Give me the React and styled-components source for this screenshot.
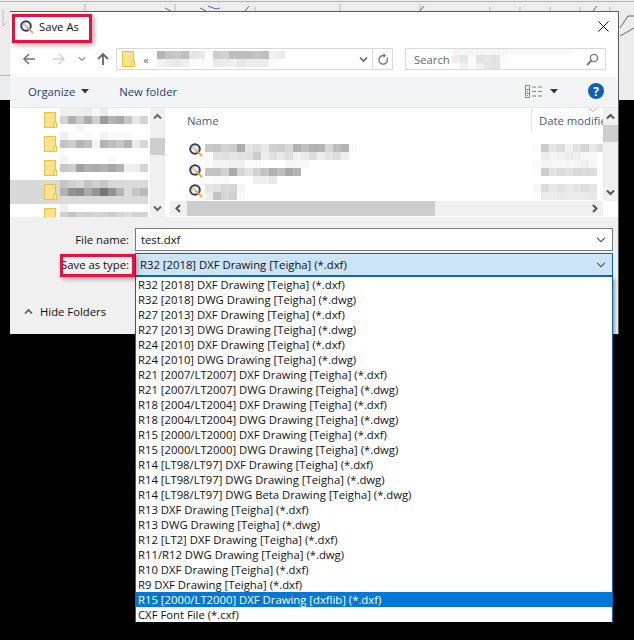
import React from 'react';
import styled, { createGlobalStyle } from 'styled-components';

const GlobalStyle = createGlobalStyle`
  html, body { margin: 0; padding: 0; background: #000; }
  * { box-sizing: border-box; }
  body { font-family: "Open Sans", "Noto Sans", sans-serif; font-size: 11.3px; color: #111; }
`;

const Page = styled.div`
  position: relative;
  width: 634px;
  height: 640px;
  overflow: hidden;
  background: #000;
  padding: 11px 0 0 10px;
`;

const Backdrop = styled.svg`
  position: absolute;
  left: 0;
  top: 0;
`;

const Dialog = styled.div`
  position: relative;
  width: 609px;
  height: 323px;
  background: #f0f0f0;
  border-top: 1px solid #5c5c5c;
  border-right: 1px solid #5c5c5c;
  display: flex;
  flex-direction: column;
`;

const TitleBar = styled.div`
  height: 24px;
  background: #fff;
  display: flex;
  align-items: center;
  padding: 5px 9px 0 10px;
  flex: none;
`;

const TitleText = styled.span`
  margin-left: 5px;
  flex: 1;
`;

const AddressRow = styled.div`
  height: 41px;
  background: #fff;
  flex: none;
  display: flex;
  align-items: flex-start;
  padding: 12px 12px 0 12px;
`;

const NavButton = styled.span`
  width: ${p => p.$w}px;
  margin-left: ${p => p.$ml || 0}px;
  height: 22px;
  display: flex;
  align-items: center;
  justify-content: center;
  flex: none;
`;

const AddressBox = styled.div`
  width: 277px;
  height: 22px;
  border: 1px solid #d9d9d9;
  display: flex;
  align-items: center;
  padding-left: 5px;
`;

const Crumb = styled.span`
  width: 22px;
  text-align: center;
  color: #666;
  font-size: 11px;
`;

const AddressEnd = styled.div`
  margin-left: auto;
  display: flex;
  height: 100%;
  align-items: center;
`;

const Divider = styled.span`
  width: 20px;
  height: 100%;
  border-left: 1px solid #d9d9d9;
  display: flex;
  align-items: center;
  justify-content: center;
`;

const SearchBox = styled.div`
  width: 201px;
  height: 22px;
  border: 1px solid #d9d9d9;
  margin-left: 12px;
  display: flex;
  align-items: center;
  padding: 0 6px 0 8px;
  color: #666;
  gap: 2px;
  overflow: hidden;
`;

const SearchIcon = styled.svg`
  margin-left: auto;
  flex: none;
`;

const Toolbar = styled.div`
  height: 31px;
  background: #f3f4f6;
  border-bottom: 1px solid #e4e6ea;
  flex: none;
  display: flex;
  align-items: center;
  padding: 0 14px 2px 18px;
  color: #1e3f73;
`;

const ToolLabel = styled.span`
  margin-right: ${p => p.$gap}px;
  display: flex;
  align-items: center;
  gap: 6px;
`;

const ToolRight = styled.div`
  margin-left: auto;
  display: flex;
  align-items: center;
`;

const HelpIcon = styled.svg`
  margin-left: 22px;
`;

const Panes = styled.div`
  height: 109px;
  flex: none;
  display: flex;
  background: #fff;
  overflow: hidden;
`;

const Tree = styled.div`
  width: 140px;
  flex: none;
  overflow: hidden;
`;

const TreeRow = styled.div`
  height: 24px;
  display: flex;
  align-items: center;
  gap: 3px;
  padding-left: 34px;
  margin-right: 2px;
  background: ${p => (p.$active ? '#d9d9d9' : '#fff')};
`;

const VScroll = styled.div`
  width: 15px;
  flex: none;
  background: #f0f0f0;
  display: flex;
  flex-direction: column;
  justify-content: space-between;
  height: ${p => p.$h}px;
  position: relative;
`;

const ScrollArrow = styled.span`
  width: ${p => (p.$wide ? 17 : 15)}px;
  height: ${p => (p.$wide ? 15 : 17)}px;
  flex: none;
  display: flex;
  align-items: center;
  justify-content: center;
  margin-left: ${p => (p.$end ? 'auto' : 0)};
`;

const ScrollTrack = styled.div`
  flex: 1;
  padding-top: ${p => p.$before}px;
`;

const ScrollThumb = styled.span`
  display: block;
  background: #cdcdcd;
  height: 17px;
`;

const Files = styled.div`
  flex: 1;
  margin-left: 5px;
  display: flex;
  flex-direction: column;
  min-width: 0;
`;

const FilesTop = styled.div`
  height: 93px;
  flex: none;
  display: flex;
`;

const FilesMain = styled.div`
  flex: 1;
  min-width: 0;
  display: flex;
  flex-direction: column;
  overflow: hidden;
`;

const HeaderRow = styled.div`
  height: 25px;
  flex: none;
  display: flex;
  align-items: center;
  color: #3f5a8c;
  padding-left: 17px;
`;

const NameHeader = styled.span`
  flex: 1;
`;

const DateHeader = styled.span`
  position: relative;
  width: 72px;
  height: 25px;
  flex: none;
  overflow: hidden;
  white-space: nowrap;
  border-left: 1px solid #e5e5e5;
  padding-left: 7px;
  line-height: 25px;
`;

const SortMark = styled.svg`
  position: absolute;
  right: 6px;
  top: 0;
`;

const FileRows = styled.div`
  flex: 1;
  display: flex;
  padding: 11px 0 0 19px;
`;

const IconColumn = styled.div`
  width: 16px;
  flex: none;
  margin-top: -1px;
  display: flex;
  flex-direction: column;
  gap: 6.5px;
`;

const DateColumn = styled.div`
  width: 70px;
  flex: none;
  margin-left: auto;
  overflow: hidden;
`;

const HScroll = styled.div`
  height: 15px;
  flex: none;
  display: flex;
  align-items: stretch;
  background: #f0f0f0;
`;

const HThumb = styled.span`
  width: 248px;
  background: #cdcdcd;
  flex: none;
`;

const Corner = styled.span`
  width: 15px;
  background: #fff;
  flex: none;
`;

const Form = styled.div`
  flex: none;
  display: grid;
  grid-template-columns: 119px 478px;
  grid-template-rows: 23px 23px;
  row-gap: 2px;
  column-gap: 6px;
  padding-top: 11px;
`;

const FormLabel = styled.label`
  text-align: right;
  align-self: center;
`;

const Field = styled.div`
  height: 23px;
  border: 1px solid ${p => (p.$open ? '#0a67b4' : '#7a7a7a')};
  background: ${p => (p.$open ? '#cce4f7' : '#fff')};
  display: flex;
  align-items: center;
  justify-content: space-between;
  padding: 0 6px 0 ${p => (p.$open ? 4 : 5)}px;
`;

const Footer = styled.div`
  margin-top: 26px;
  height: 18px;
  padding-left: 14px;
  display: flex;
  align-items: center;
  gap: 7px;
`;

const Dropdown = styled.ul`
  position: absolute;
  left: 135px;
  top: 276px;
  width: 478px;
  margin: 0;
  padding: 0;
  list-style: none;
  background: #fff;
  border: 1px solid #0a67b4;
  border-bottom-color: #000;
  box-shadow: 2px 3px 3px rgba(0, 0, 0, 0.35);
`;

const Option = styled.li`
  height: 15px;
  line-height: 15px;
  padding-left: 2px;
  white-space: nowrap;
  background: ${p => (p.$selected ? '#0078d7' : 'transparent')};
  color: ${p => (p.$selected ? '#fff' : '#111')};
`;

const Callout = styled.div`
  position: absolute;
  left: ${p => p.$x}px;
  top: ${p => p.$y}px;
  width: ${p => p.$w}px;
  height: ${p => p.$h}px;
  border: 3px solid #e8103f;
  box-shadow: 2px 2px 5px rgba(0, 0, 0, 0.35);
`;

const MosaicGrid = styled.div`
  display: grid;
  grid-template-columns: repeat(${p => p.$cols}, 8px);
  grid-auto-rows: 8px;
  flex: none;
`;

const MosaicCell = styled.span`
  background: ${p => p.$c};
`;

// censored text in the screenshot, given as rows of grey levels
const Mosaic = ({ rows }) => (
  <MosaicGrid $cols={rows[0].length}>
    {rows.flat().map((v, i) => (
      <MosaicCell key={i} $c={`rgb(${v},${v},${v})`} />
    ))}
  </MosaicGrid>
);

const QIcon = () => (
  <svg width="14" height="14" viewBox="0 0 14 14">
    <circle cx="6" cy="6" r="4.8" fill="#eef1f5" stroke="#2e3f78" strokeWidth="2" />
    <path d="M3.8 3.8L12.5 12.5" stroke="#e8a83a" strokeWidth="1.8" strokeLinecap="round" />
    <path d="M3.5 3.5L7 7" stroke="#f2d58a" strokeWidth="1.2" />
  </svg>
);

const Folder = () => (
  <svg width="13" height="16" viewBox="0 0 13 16">
    <rect x="0.5" y="0.5" width="11" height="15" fill="#fde28c" stroke="#e9c33c" />
    <rect x="10" y="10" width="2.5" height="5.5" fill="#fff3c4" stroke="#e9c33c" />
  </svg>
);

const Arrow = ({ right, color }) => (
  <svg width="14" height="14" viewBox="0 0 14 14">
    <path d={right ? 'M1 7h11M7 2l5 5-5 5' : 'M13 7H2M7 2L2 7l5 5'} fill="none" stroke={color} strokeWidth="1.6" />
  </svg>
);

const Chevron = ({ dir = 'down', w = 9, color = '#555', sw = 1.6 }) => {
  const d = {
    down: 'M1 2.5l3.5 3.5L8 2.5',
    up: 'M1 6.5L4.5 3 8 6.5',
    left: 'M6 1L2.5 4.5 6 8',
    right: 'M3 1l3.5 3.5L3 8',
  }[dir];
  return (
    <svg width={w} height={w} viewBox="0 0 9 9">
      <path d={d} fill="none" stroke={color} strokeWidth={sw} />
    </svg>
  );
};

const Caret = () => (
  <svg width="8" height="5" viewBox="0 0 8 5">
    <path d="M0 0h8L4 4.5z" fill="#1f3864" />
  </svg>
);

const ViewsIcon = () => (
  <svg width="17" height="13" viewBox="0 0 17 13">
    <rect x="0.5" y="0.5" width="4" height="12" fill="#fff" stroke="#8d8d8d" />
    <path d="M1 4.5h3M1 8.5h3M7 2h4M13 2h4M7 6.5h4M13 6.5h4M7 11h4M13 11h4" stroke="#808080" />
    <rect x="2" y="10" width="1" height="1" fill="#c33" />
    <rect x="2" y="6" width="1" height="1" fill="#48a" />
  </svg>
);

const options = [
  'R32 [2018] DXF Drawing [Teigha] (*.dxf)',
  'R32 [2018] DWG Drawing [Teigha] (*.dwg)',
  'R27 [2013] DXF Drawing [Teigha] (*.dxf)',
  'R27 [2013] DWG Drawing [Teigha] (*.dwg)',
  'R24 [2010] DXF Drawing [Teigha] (*.dxf)',
  'R24 [2010] DWG Drawing [Teigha] (*.dwg)',
  'R21 [2007/LT2007] DXF Drawing [Teigha] (*.dxf)',
  'R21 [2007/LT2007] DWG Drawing [Teigha] (*.dwg)',
  'R18 [2004/LT2004] DXF Drawing [Teigha] (*.dxf)',
  'R18 [2004/LT2004] DWG Drawing [Teigha] (*.dwg)',
  'R15 [2000/LT2000] DXF Drawing [Teigha] (*.dxf)',
  'R15 [2000/LT2000] DWG Drawing [Teigha] (*.dwg)',
  'R14 [LT98/LT97] DXF Drawing [Teigha] (*.dxf)',
  'R14 [LT98/LT97] DWG Drawing [Teigha] (*.dwg)',
  'R14 [LT98/LT97] DWG Beta Drawing [Teigha] (*.dwg)',
  'R13 DXF Drawing [Teigha] (*.dxf)',
  'R13 DWG Drawing [Teigha] (*.dwg)',
  'R12 [LT2] DXF Drawing [Teigha] (*.dxf)',
  'R11/R12 DWG Drawing [Teigha] (*.dwg)',
  'R10 DXF Drawing [Teigha] (*.dxf)',
  'R9 DXF Drawing [Teigha] (*.dxf)',
  'R15 [2000/LT2000] DXF Drawing [dxflib] (*.dxf)',
  'CXF Font File (*.cxf)',
];

const treeBlur = [
  [[238, 240, 238, 236, 248, 236, 250, 250, 255, 255, 255], [212, 176, 200, 172, 208, 156, 180, 170, 198, 230, 212], [255, 255, 244, 255, 255, 255, 255, 255, 255, 255, 255]],
  [[240, 252, 255, 250, 255, 244, 250, 250, 250, 255, 255], [196, 206, 180, 190, 244, 180, 190, 200, 180, 234, 214], [255, 255, 255, 255, 255, 255, 255, 255, 255, 255, 255]],
  [[244, 255, 255, 255, 255, 255, 248, 255, 255, 255, 255], [200, 206, 160, 176, 170, 180, 166, 180, 240, 236, 212], [255, 255, 255, 255, 255, 255, 255, 255, 255, 255, 255]],
  [[196, 208, 216, 196, 208, 200, 216, 216, 218, 218, 218], [176, 146, 140, 170, 148, 118, 146, 178, 218, 196, 184], [218, 218, 218, 218, 218, 218, 218, 218, 218, 218, 218]],
  [[240, 255, 255, 255, 255, 255, 255, 255, 255, 255, 255], [208, 196, 210, 208, 212, 210, 204, 212, 220, 210, 210], [255, 255, 255, 255, 255, 255, 255, 255, 255, 255, 255]],
];

const fileBlur = [
  [200, 198, 210, 204, 172, 228, 222, 232, 208, 205, 215, 176, 190, 178, 180, 215, 190, 180, 250],
  [250, 226, 224, 228, 226, 224, 204, 236, 224, 232, 222, 240, 234, 222, 238, 228, 222, 238, 255],
  [250, 245, 244, 240, 240, 250, 250, 255, 255, 255, 246, 246, 248, 255, 255, 255, 255, 255, 255],
  [195, 196, 210, 170, 214, 226, 210, 195, 176, 190, 170, 180, 255, 255, 255, 255, 255, 255, 255],
  [255, 250, 248, 255, 255, 255, 238, 240, 232, 255, 255, 255, 255, 255, 255, 255, 255, 255, 255],
  [228, 226, 216, 214, 245, 255, 255, 255, 255, 255, 255, 255, 255, 255, 255, 255, 255, 255, 255],
  [238, 194, 214, 208, 250, 255, 255, 255, 255, 255, 255, 255, 255, 255, 255, 255, 255, 255, 255],
];

const dateBlur = [
  [250, 204, 230, 220, 240, 226, 214, 232, 220],
  [255, 236, 244, 240, 236, 240, 246, 248, 255],
  [250, 244, 246, 248, 246, 244, 240, 246, 255],
  [252, 204, 226, 220, 224, 216, 220, 222, 255],
  [255, 255, 255, 255, 255, 255, 255, 255, 255],
  [248, 220, 232, 226, 232, 228, 222, 228, 255],
  [252, 234, 236, 232, 234, 236, 234, 232, 255],
];

const addressBlur = [
  [180, 195, 200, 190, 228, 232, 255, 205, 210, 190, 190, 190, 195, 190, 240, 235],
  [240, 236, 232, 238, 250, 250, 255, 234, 236, 240, 230, 236, 236, 236, 250, 255],
];

const searchBlur = [
  [245, 245, 245, 245, 245, 245, 245, 248, 248, 248, 248, 248, 248, 248, 248],
  [238, 230, 250, 226, 230, 226, 250, 255, 255, 255, 255, 255, 255, 255, 255],
  [255, 240, 250, 240, 230, 226, 255, 255, 255, 255, 255, 255, 255, 255, 255],
];

const App = () => (
  <Page>
    <GlobalStyle />
    <Backdrop width="634" height="100" viewBox="0 0 634 100">
      <rect width="634" height="100" fill="#ececec" />
      <path d="M0 1.5H634M0 75.5H10M85 4v7M175 4v7M255 7v4M340 4v7M420 4v7M490 7v4M520 7v4M550 7v4M580 7v4M610 7v4" stroke="#b5b5b5" />
      <path d="M165 8l6 3M200 8l6 3M245 11l4-5M420 11l4-5M593 11l4-5M620 28l8-12 6 0M620 36L634 28" fill="none" stroke="#666" />
      <path d="M208 6l8 3 4-1" fill="none" stroke="#5a5ad0" />
      <path d="M3 10v16l4-4" fill="none" stroke="#bbb" />
    </Backdrop>
    <Dialog>
      <TitleBar>
        <QIcon />
        <TitleText>Save As</TitleText>
        <svg width="11" height="11" viewBox="0 0 11 11">
          <path d="M0.5 0.5l10 10M10.5 0.5l-10 10" stroke="#111" strokeWidth="1" />
        </svg>
      </TitleBar>
      <AddressRow>
        <NavButton $w={14}><Arrow color="#777" /></NavButton>
        <NavButton $w={14} $ml={16}><Arrow right color="#d4d4d4" /></NavButton>
        <NavButton $w={14} $ml={9}><Chevron w={8} color="#999" /></NavButton>
        <NavButton $w={27}>
          <svg width="14" height="14" viewBox="0 0 14 14">
            <path d="M7 13V2M2 7l5-5 5 5" fill="none" stroke="#666" strokeWidth="1.8" />
          </svg>
        </NavButton>
        <AddressBox>
          <Folder />
          <Crumb>«</Crumb>
          <Mosaic rows={addressBlur} />
          <AddressEnd>
            <NavButton $w={18}><Chevron color="#666" /></NavButton>
            <Divider>
              <svg width="12" height="13" viewBox="0 0 12 13">
                <path d="M9.8 4.5A4.3 4.3 0 1 1 6 2.5H8" fill="none" stroke="#777" strokeWidth="1.4" />
                <path d="M6.5 0L9 2.5 6.5 5z" fill="#777" />
              </svg>
            </Divider>
          </AddressEnd>
        </AddressBox>
        <SearchBox>
          Search
          <Mosaic rows={searchBlur} />
          <SearchIcon width="13" height="13" viewBox="0 0 13 13">
            <circle cx="8" cy="5" r="3.6" fill="none" stroke="#777" strokeWidth="1.4" />
            <path d="M5.5 7.5L1 12" stroke="#777" strokeWidth="1.8" />
          </SearchIcon>
        </SearchBox>
      </AddressRow>
      <Toolbar>
        <ToolLabel $gap={30}>Organize <Caret /></ToolLabel>
        <ToolLabel $gap={0}>New folder</ToolLabel>
        <ToolRight>
          <ViewsIcon />
          <NavButton $w={24}><Caret /></NavButton>
          <HelpIcon width="16" height="16" viewBox="0 0 16 16">
            <circle cx="8" cy="8" r="8" fill="#0a63b8" />
            <text x="8" y="12.5" textAnchor="middle" fontSize="12" fontWeight="700" fontFamily="Open Sans, sans-serif" fill="#fff">?</text>
          </HelpIcon>
        </ToolRight>
      </Toolbar>
      <Panes>
        <Tree>
          {treeBlur.map((rows, i) => (
            <TreeRow key={i} $active={i === 3}>
              <Folder />
              <Mosaic rows={rows} />
            </TreeRow>
          ))}
        </Tree>
        <VScroll $h={109}>
          <ScrollArrow><Chevron dir="up" color="#666" sw={2} /></ScrollArrow>
          <ScrollTrack $before={13}><ScrollThumb /></ScrollTrack>
          <ScrollArrow><Chevron dir="down" color="#666" sw={2} /></ScrollArrow>
        </VScroll>
        <Files>
          <FilesTop>
            <FilesMain>
              <HeaderRow>
                <NameHeader>Name</NameHeader>
                <DateHeader>
                  Date modified
                  <SortMark width="8" height="4" viewBox="0 0 8 4">
                    <path d="M0.5 0.5L4 3.5 7.5 0.5" fill="none" stroke="#aaa" />
                  </SortMark>
                </DateHeader>
              </HeaderRow>
              <FileRows>
                <IconColumn>
                  <QIcon />
                  <QIcon />
                  <QIcon />
                </IconColumn>
                <Mosaic rows={fileBlur} />
                <DateColumn><Mosaic rows={dateBlur} /></DateColumn>
              </FileRows>
            </FilesMain>
            <VScroll $h={93}>
              <ScrollArrow><Chevron dir="up" color="#555" sw={2} /></ScrollArrow>
              <ScrollTrack $before={0}><ScrollThumb /></ScrollTrack>
              <ScrollArrow><Chevron dir="down" color="#555" sw={2} /></ScrollArrow>
            </VScroll>
          </FilesTop>
          <HScroll>
            <ScrollArrow $wide><Chevron dir="left" color="#555" sw={2} /></ScrollArrow>
            <HThumb />
            <ScrollArrow $wide $end><Chevron dir="right" color="#555" sw={2} /></ScrollArrow>
            <Corner />
          </HScroll>
        </Files>
      </Panes>
      <Form>
        <FormLabel>File name:</FormLabel>
        <Field>test.dxf<Chevron w={10} color="#555" sw={1} /></Field>
        <FormLabel>Save as type:</FormLabel>
        <Field $open>{options[0]}<Chevron w={10} color="#555" sw={1} /></Field>
      </Form>
      <Footer>
        <Chevron dir="up" color="#555" sw={1.6} />
        Hide Folders
      </Footer>
    </Dialog>
    <Dropdown>
      {options.map((o, i) => (
        <Option key={o} $selected={i === 21}>{o}</Option>
      ))}
    </Dropdown>
    <Callout $x={12} $y={14} $w={80} $h={29} />
    <Callout $x={60} $y={254} $w={75} $h={23} />
  </Page>
);

export default App;
